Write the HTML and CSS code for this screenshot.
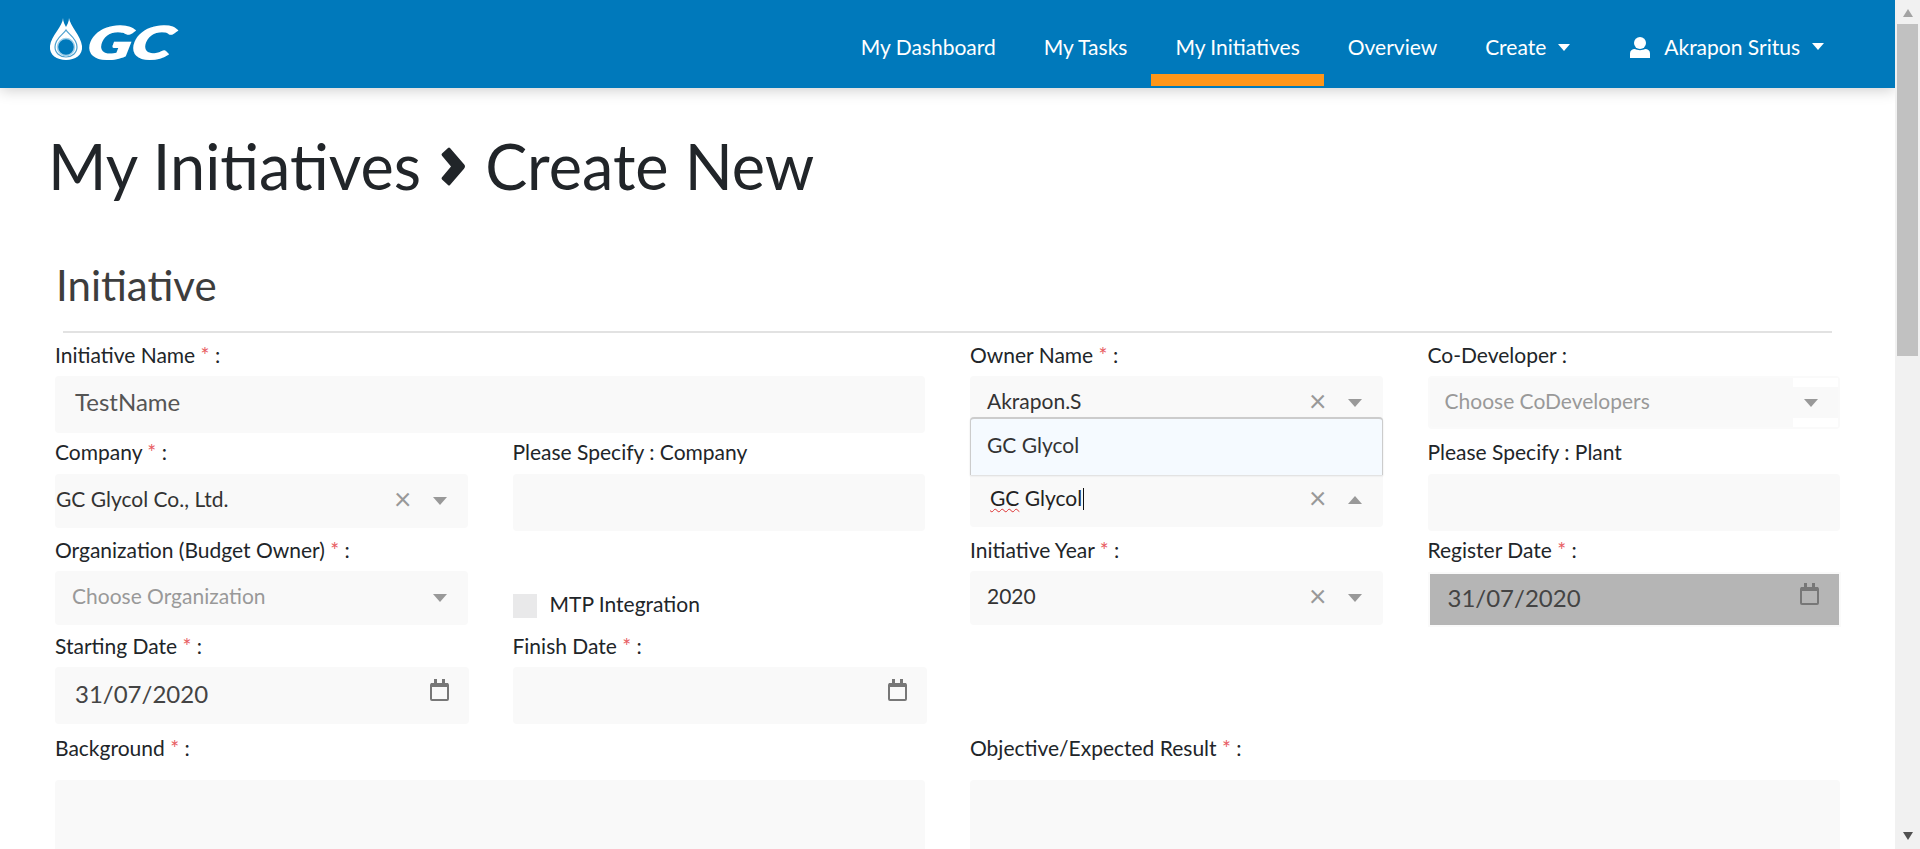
FILE: index.html
```html
<!DOCTYPE html>
<html lang="en">
<head>
<meta charset="utf-8">
<title>My Initiatives - Create New</title>
<link rel="stylesheet" href="styles.css">
</head>
<body>
<div class="app">
  <header class="navbar">
    <a class="logo" href="#" aria-label="GC">
      <svg class="logo-svg" width="150" height="50" viewBox="0 0 150 50">
        <path fill="#fff" d="M13 0 C13 8 1 18 0 28 C-1 37 7 42 16 42 C25 42 33 37 32 28 C31 18 20 8 19 0 C19 4 17 7 16 9 C15 7 13 4 13 0 Z"/>
        <path fill="none" stroke="#0079bb" stroke-width="1.2" opacity=".7" d="M16 12 C14 16 5 20 5 29 C5 35 10 39 16 39 C22 39 27 35 27 29 C27 20 18 16 16 12 Z"/>
        <circle cx="16" cy="29" r="8.5" fill="#0079bb" stroke="#9fd0ea" stroke-width="1.5"/>
        <text class="logo-text" x="44" y="41" textLength="84" lengthAdjust="spacingAndGlyphs" transform="skewX(-12)">GC</text>
      </svg>
    </a>
    <nav class="nav">
      <a class="nav-link" href="#">My Dashboard</a>
      <a class="nav-link" href="#">My Tasks</a>
      <a class="nav-link active" href="#">My Initiatives</a>
      <a class="nav-link" href="#">Overview</a>
      <a class="nav-link" href="#">Create<span class="nav-caret"></span></a>
      <a class="nav-link user" href="#">
        <svg class="user-icon" width="20" height="21" viewBox="0 0 20 21"><ellipse cx="10" cy="6" rx="6" ry="6" fill="#fff"/><path fill="#fff" d="M0 21 V16.5 C0 13.5 2 12 5 12 C7 13.5 13 13.5 15 12 C18 12 20 13.5 20 16.5 V21 Z"/></svg>
        Akrapon Sritus<span class="nav-caret"></span>
      </a>
    </nav>
  </header>

  <main class="content">
    <h1 class="page-title">My Initiatives
      <svg class="crumb" width="26" height="39" viewBox="0 0 26 36" preserveAspectRatio="none"><path fill="#212529" d="M2 6 L8 1 Q9 0 10 1 L24 16 Q26 18 24 20 L10 35 Q9 36 8 35 L2 30 Q1 29 2 28 L11 18 L2 8 Q1 7 2 6 Z"/></svg>
      Create New</h1>
    <h2 class="section-title">Initiative</h2>
    <hr class="rule">

    <form class="form-grid">
      <div class="cell span-2">
        <label class="label">Initiative Name <span class="req">*</span> :</label>
        <div class="field input-lg text-value">TestName</div>
      </div>
      <div class="cell">
        <label class="label">Owner Name <span class="req">*</span> :</label>
        <div class="field select">
          <span class="select-value">Akrapon.S</span>
          <span class="clear">×</span><span class="arrow"></span>
        </div>
      </div>
      <div class="cell">
        <label class="label">Co-Developer :</label>
        <div class="field select select-codev">
          <span class="select-value placeholder">Choose CoDevelopers</span>
          <span class="codev-end"><span class="arrow"></span></span>
        </div>
      </div>

      <div class="cell row-two">
        <label class="label">Company <span class="req">*</span> :</label>
        <div class="field select">
          <span class="select-value company-value">GC Glycol Co., Ltd.</span>
          <span class="clear">×</span><span class="arrow"></span>
        </div>
      </div>
      <div class="cell row-two">
        <label class="label">Please Specify : Company</label>
        <div class="field input-lg"></div>
      </div>
      <div class="cell plant-cell">
        <div class="field select plant-select">
          <span class="select-value typed"><span class="spell">GC</span> Glycol<span class="text-caret"></span></span>
          <span class="clear">×</span><span class="arrow up"></span>
        </div>
        <div class="dropdown">GC Glycol</div>
      </div>
      <div class="cell row-two">
        <label class="label">Please Specify : Plant</label>
        <div class="field input-lg"></div>
      </div>

      <div class="cell">
        <label class="label">Organization (Budget Owner) <span class="req">*</span> :</label>
        <div class="field select">
          <span class="select-value placeholder">Choose Organization</span>
          <span class="arrow"></span>
        </div>
      </div>
      <div class="cell mtp-cell">
        <span class="checkbox"></span><span class="mtp-label">MTP Integration</span>
      </div>
      <div class="cell">
        <label class="label">Initiative Year <span class="req">*</span> :</label>
        <div class="field select">
          <span class="select-value">2020</span>
          <span class="clear">×</span><span class="arrow"></span>
        </div>
      </div>
      <div class="cell register-cell">
        <label class="label">Register Date <span class="req">*</span> :</label>
        <div class="field date date-disabled">
          <span class="date-value">31/07/2020</span>
          <svg class="cal" width="19" height="22" viewBox="0 0 19 22"><use href="#cal-icon"/></svg>
        </div>
      </div>

      <div class="cell">
        <label class="label">Starting Date <span class="req">*</span> :</label>
        <div class="field date">
          <span class="date-value">31/07/2020</span>
          <svg class="cal" width="19" height="22" viewBox="0 0 19 22"><use href="#cal-icon"/></svg>
        </div>
      </div>
      <div class="cell">
        <label class="label">Finish Date <span class="req">*</span> :</label>
        <div class="field date">
          <span class="date-value"></span>
          <svg class="cal" width="19" height="22" viewBox="0 0 19 22"><use href="#cal-icon"/></svg>
        </div>
      </div>
      <div class="cell span-2"></div>

      <div class="cell span-2 area-cell">
        <label class="label">Background <span class="req">*</span> :</label>
        <div class="field textarea"></div>
      </div>
      <div class="cell span-2 area-cell">
        <label class="label">Objective/Expected Result <span class="req">*</span> :</label>
        <div class="field textarea"></div>
      </div>
    </form>
  </main>
</div>

<aside class="scrollbar">
  <span class="sb-arrow sb-up"></span>
  <span class="sb-thumb"></span>
  <span class="sb-spacer"></span>
  <span class="sb-arrow sb-down"></span>
</aside>

<svg class="defs" width="0" height="0">
  <symbol id="cal-icon" viewBox="0 0 19 22">
    <path fill="none" stroke="#777" stroke-width="2" d="M2 5 H17 Q18 5 18 6 V20 Q18 21 17 21 H2 Q1 21 1 20 V6 Q1 5 2 5 Z"/>
    <rect x="1" y="4" width="17" height="4" fill="#777"/>
    <rect x="4" y="0" width="3" height="5" fill="#777"/>
    <rect x="12" y="0" width="3" height="5" fill="#777"/>
  </symbol>
</svg>
</body>
</html>
```

FILE: styles.css
```css
* { box-sizing: border-box; }
html, body { margin: 0; height: 849px; overflow: hidden; }
body {
  display: flex;
  background: #fff;
  font-family: "Lato", "Noto Sans", sans-serif;
  color: #212529;
  font-size: 21px;
}
.app { flex: 1; min-width: 0; height: 849px; overflow: hidden; }

.navbar {
  position: relative;
  height: 88px;
  background: #0079bb;
  box-shadow: 0 2px 14px rgba(0,0,0,.2);
  display: flex;
  justify-content: space-between;
}
.logo { display: block; padding: 18px 0 0 50px; }
.logo-svg { overflow: visible; }
.logo-text { font: italic 900 45px "Lato", sans-serif; fill: #fff; stroke: #fff; stroke-width: 1.5px; }
.nav { display: flex; padding-right: 47px; }
.nav-link {
  color: #fff;
  text-decoration: none;
  font-size: 21px;
  padding: 34px 24px 0;
  height: 86px;
  line-height: 26px;
  white-space: nowrap;
}
.nav-link.active { border-bottom: 12px solid #ff9619; height: 86px; }
.nav-link.user { padding-left: 36px; display: flex; align-items: flex-start; }
.user-icon { margin: 3px 14px 0 0; }
.nav-caret {
  display: inline-block;
  width: 0; height: 0;
  margin-left: 12px;
  vertical-align: 4px;
  border-left: 6.5px solid transparent;
  border-right: 6.5px solid transparent;
  border-top: 7px solid #fff;
}
.user .nav-caret { margin-top: 9px; }

.content { padding: 0 55px; }
.page-title {
  margin: 0 0 0 -7px;
  padding-top: 40px;
  font-size: 63px;
  line-height: 76px;
  font-weight: 400;
  white-space: nowrap;
}
.crumb { margin: 0 3px 0 3px; vertical-align: 4px; }
.section-title {
  margin: 57px 0 0 1px;
  font-size: 42px;
  line-height: 48px;
  font-weight: 400;
  color: #3d3d3d;
}
.rule {
  margin: 22px 0 0 8px;
  width: 1769px;
  height: 2px;
  border: 0;
  background: #e2e2e2;
}

.form-grid {
  display: grid;
  width: 1785px;
  grid-template-columns: repeat(4, 412.5px);
  grid-template-rows: 97px 98px 96px 102px 110px;
  column-gap: 45px;
  margin-top: 12px;
}
.cell { position: relative; min-width: 0; }
.span-2 { grid-column: span 2; }
.label {
  display: block;
  height: 31px;
  line-height: 20px;
  font-size: 21px;
  color: #212529;
  white-space: nowrap;
}
.row-two .label { height: 32px; }
.register-cell .label { height: 32px; }
.req { color: #e85c62; }

.field {
  background: #f9f9f9;
  border-radius: 4px;
}
.input-lg { height: 57px; }
.text-value {
  padding-left: 20px;
  font-size: 24px;
  line-height: 52px;
  color: #555;
}
.select {
  height: 54px;
  display: flex;
  align-items: center;
  padding: 0 21px 0 17px;
  font-size: 21px;
  color: #333;
}
.select-value { flex: 1; padding-bottom: 5px; }
.company-value { margin-left: -16px; }
.placeholder { color: #999; }
.clear {
  color: #999;
  font-size: 30px;
  line-height: 24px;
  margin: 0 21px 6px 0;
}
.arrow {
  width: 0; height: 0;
  border-left: 7.5px solid transparent;
  border-right: 7.5px solid transparent;
  border-top: 8px solid #999;
}
.arrow.up { border-top: 0; border-bottom: 8px solid #999; }

.select-codev {
  height: 53px;
  padding: 0 0 0 15px;
  border: 2px solid #fafafa;
  position: relative;
}
.codev-end {
  align-self: stretch;
  width: 45px;
  background: linear-gradient(#fff 9px, #f9f9f9 9px, #f9f9f9 40px, #fff 40px);
  display: flex;
  align-items: center;
  padding-left: 11px;
}

.plant-cell { padding-top: 31px; }
.typed { color: #222; padding-left: 3px; }
.spell { text-decoration: underline wavy #d33; text-decoration-thickness: 1px; text-underline-offset: 2px; }
.text-caret {
  display: inline-block;
  width: 1px;
  height: 22px;
  margin-left: 1px;
  vertical-align: -4px;
  background: #111;
}
.dropdown {
  position: absolute;
  left: 0; right: 0;
  top: -25px;
  height: 58px;
  padding: 13px 0 0 16px;
  font-size: 21px;
  line-height: 26px;
  color: #333;
  background: #f5faff;
  border: 1px solid #ccc;
  border-top: 2px solid #ccc;
  border-bottom: 0;
  border-radius: 4px 4px 0 0;
  box-shadow: 0 1px 2px rgba(0,0,0,.12);
}

.mtp-cell { display: flex; align-items: center; padding-top: 35px; height: 97px; }
.checkbox {
  width: 24px; height: 24px;
  background: #e9e9ea;
  margin: 0 13px 0 0;
}
.mtp-label { font-size: 21px; padding-bottom: 6px; }

.date {
  height: 57px;
  display: flex;
  justify-content: space-between;
  padding: 12px 20px 0 20px;
  width: 414px;
}
.date-value { font-size: 24px; line-height: 29px; color: #444; }
.date-disabled {
  width: 413px;
  height: 55px;
  background: #b5b5b5;
  border: 2px solid #fafafa;
  border-radius: 0;
  padding: 9px 20px 0 18px;
}

.area-cell .label { height: 42px; }
.textarea { height: 100px; border-radius: 4px 4px 0 0; width: 870px; }

.scrollbar {
  width: 25px;
  height: 849px;
  background: #f1f1f1;
  display: flex;
  flex-direction: column;
  align-items: center;
  flex: none;
}
.sb-arrow { width: 0; height: 0; flex: none; border-left: 5.5px solid transparent; border-right: 5.5px solid transparent; }
.sb-up { margin: 9px 0 7px; border-bottom: 8px solid #a3a3a3; }
.sb-thumb { width: 21px; height: 332px; background: #c1c1c1; flex: none; }
.sb-spacer { flex: 1; }
.sb-down { margin: 7px 0 9px; border-top: 8px solid #505050; }
.defs { position: absolute; }
```
